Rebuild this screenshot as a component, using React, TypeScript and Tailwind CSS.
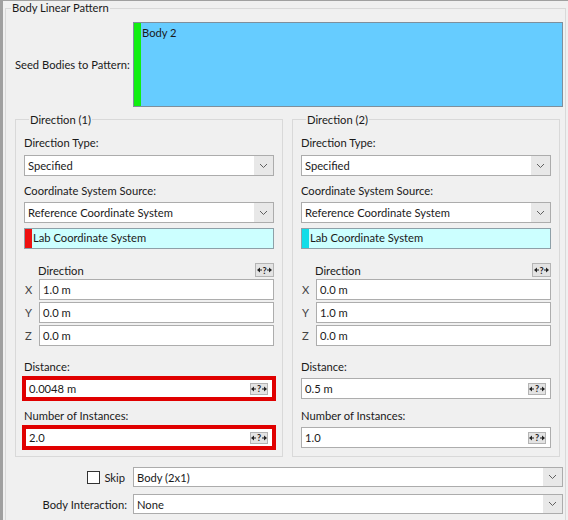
import React from "react";

const font = "font-['Lato','Liberation_Sans',sans-serif] text-[11.2px] leading-[15px] text-[#1a1a1a]";

function Chevron() {
  return (
    <div className="w-[19px] self-stretch bg-[#e8e8e8] flex items-center justify-center">
      <svg width="9" height="6" viewBox="0 0 9 6">
        <path d="M1 1 L4.5 4.5 L8 1" fill="none" stroke="#606060" strokeWidth="1" />
      </svg>
    </div>
  );
}

function Select({ value, h = "h-[21px]" }: { value: string; h?: string }) {
  return (
    <div className={`flex items-center ${h} border border-[#acacac] bg-white`}>
      <span className="flex-1 px-[3px] truncate">{value}</span>
      <Chevron />
    </div>
  );
}

function Arrow({ dir }: { dir: "l" | "r" }) {
  return (
    <svg width="5" height="6" viewBox="0 0 5 6">
      {dir === "l" ? (
        <path d="M0 3 L3 0.5 L3 5.5 Z M3 2.5 H5 V3.5 H3 Z" fill="#222" />
      ) : (
        <path d="M5 3 L2 0.5 L2 5.5 Z M0 2.5 H2 V3.5 H0 Z" fill="#222" />
      )}
    </svg>
  );
}

function QButton({ small }: { small?: boolean }) {
  return (
    <div
      className={`${small ? "w-[18px] h-[12px]" : "w-[19px] h-[14px]"} bg-[#e3e3e3] border border-[#b4b4b4] flex items-center justify-center`}
    >
      <Arrow dir="l" />
      <span className="text-[9px] leading-[9px] font-bold text-[#222] px-[0.5px]">?</span>
      <Arrow dir="r" />
    </div>
  );
}

function Field({ value, red, q }: { value: string; red?: boolean; q?: boolean }) {
  return (
    <div
      className={`flex items-center h-[21px] bg-white ${
        red
          ? "border-[2px] border-[#e00000] outline-[2px] outline-[#e00000] outline"
          : "border border-[#adadad]"
      }`}
    >
      <span className="flex-1 px-[3px]">{value}</span>
      {q && (
        <div className="pr-[4px]">
          <QButton small />
        </div>
      )}
    </div>
  );
}

function CoordRow({ axis, value }: { axis: string; value: string }) {
  return (
    <div className="flex items-center">
      <span className="w-[15px] pl-[1px] text-[#444]">{axis}</span>
      <div className="flex-1">
        <Field value={value} />
      </div>
    </div>
  );
}

interface Dir {
  title: string;
  bar: string;
  x: string;
  y: string;
  z: string;
  distance: string;
  instances: string;
  red: boolean;
}

function DirectionGroup({ d }: { d: Dir }) {
  return (
    <fieldset className="border border-[#d9d9d9] px-[8px] pb-[8px] min-w-0">
      <legend className="ml-[5px] px-[1px] leading-[15px]">{d.title}</legend>
      <div className="flex flex-col pt-[8px]">
        <span>Direction Type:</span>
        <div className="mt-[5px]">
          <Select value="Specified" />
        </div>
        <span className="mt-[7px]">Coordinate System Source:</span>
        <div className="mt-[4px]">
          <Select value="Reference Coordinate System" />
        </div>
        <div className="mt-[5px] flex h-[21px] border border-[#8ea0a8] bg-[#ccffff]">
          <div className={`w-[7px] ${d.bar}`} />
          <span className="px-[1px] leading-[17px]">Lab Coordinate System</span>
        </div>
        <div className="mt-[13px] flex items-end justify-between h-[15px] pl-[14px]">
          <span className="leading-[13px]">Direction</span>
          <QButton />
        </div>
        <div className="mt-[2px] flex flex-col gap-[2px]">
          <CoordRow axis="X" value={d.x} />
          <CoordRow axis="Y" value={d.y} />
          <CoordRow axis="Z" value={d.z} />
        </div>
        <span className="mt-[13px]">Distance:</span>
        <div className="mt-[4px]">
          <Field value={d.distance} red={d.red} q />
        </div>
        <span className="mt-[9px]">Number of Instances:</span>
        <div className="mt-[4px]">
          <Field value={d.instances} red={d.red} q />
        </div>
      </div>
    </fieldset>
  );
}

const directions: Dir[] = [
  { title: "Direction (1)", bar: "bg-[#ee1111]", x: "1.0 m", y: "0.0 m", z: "0.0 m", distance: "0.0048 m", instances: "2.0", red: true },
  { title: "Direction (2)", bar: "bg-[#11dde8]", x: "0.0 m", y: "1.0 m", z: "0.0 m", distance: "0.5 m", instances: "1.0", red: false },
];

export default function App() {
  return (
    <div className={`w-[568px] h-[520px] overflow-hidden bg-[#f0f0f0] border-l-[3px] border-t border-[#a0a0a0] ${font}`}>
      <fieldset className="ml-[2px] mr-[2px] border border-[#d9d9d9] min-w-0">
        <legend className="ml-[5px] px-[1px] leading-[14px]">Body Linear Pattern</legend>

        {/* Seed bodies */}
        <div className="flex items-center pl-[9px] pr-[2px] pt-[7px]">
          <span className="w-[118px] whitespace-nowrap">Seed Bodies to Pattern:</span>
          <div className="flex-1 flex h-[85px] border border-[#7e8f9c] bg-[#66ccff]">
            <div className="w-[7px] bg-[#11ee11]" />
            <span className="px-[1px] pt-[2px]">Body 2</span>
          </div>
        </div>

        {/* Directions */}
        <div className="grid grid-cols-2 gap-[9px] pl-[9px] pr-[5px] mt-[5px]">
          {directions.map((d) => (
            <DirectionGroup key={d.title} d={d} />
          ))}
        </div>

        {/* Bottom rows */}
        <div className="flex items-center pl-[9px] pr-[2px] mt-[10px]">
          <div className="w-[118px] flex items-center justify-end pr-[8px] gap-[4px]">
            <span className="w-[13px] h-[13px] border border-[#333] bg-white" />
            <span>Skip</span>
          </div>
          <div className="flex-1">
            <Select value="Body (2x1)" h="h-[20px]" />
          </div>
        </div>
        <div className="flex items-center pl-[9px] pr-[2px] mt-[7px] pb-[10px]">
          <span className="w-[118px] text-right pr-[6px]">Body Interaction:</span>
          <div className="flex-1">
            <Select value="None" h="h-[20px]" />
          </div>
        </div>
      </fieldset>
    </div>
  );
}
